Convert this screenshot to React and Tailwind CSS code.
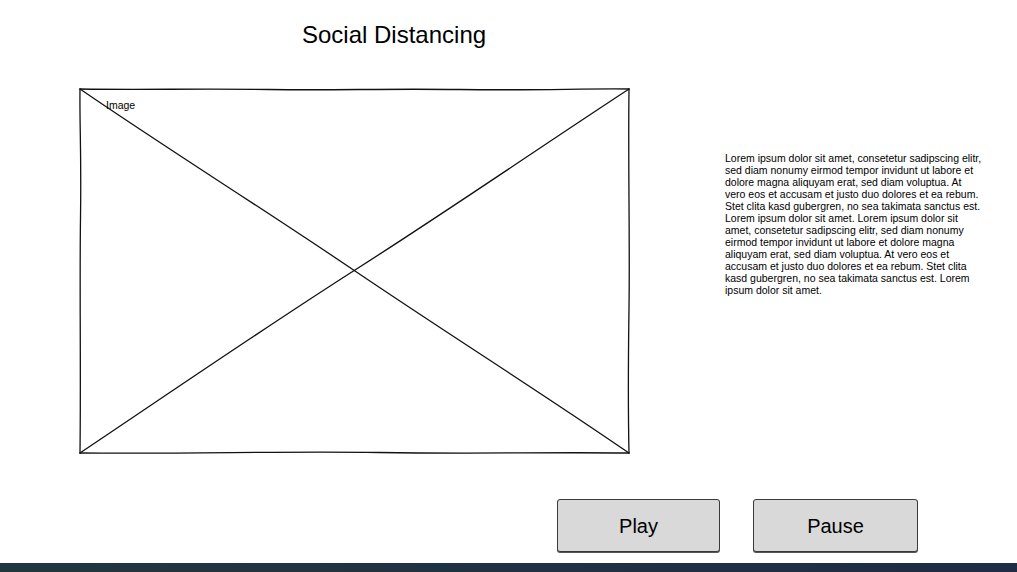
import React from 'react';

const loremText =
  'Lorem ipsum dolor sit amet, consetetur sadipscing elitr, sed diam nonumy eirmod tempor invidunt ut labore et dolore magna aliquyam erat, sed diam voluptua. At vero eos et accusam et justo duo dolores et ea rebum. Stet clita kasd gubergren, no sea takimata sanctus est. Lorem ipsum dolor sit amet. Lorem ipsum dolor sit amet, consetetur sadipscing elitr, sed diam nonumy eirmod tempor invidunt ut labore et dolore magna aliquyam erat, sed diam voluptua. At vero eos et accusam et justo duo dolores et ea rebum. Stet clita kasd gubergren, no sea takimata sanctus est. Lorem ipsum dolor sit amet.';

// Hand-drawn image placeholder (box with a cross)
const ImagePlaceholder = () => (
  <div className="relative w-[551px] h-[366px] shrink-0">
    <svg width="551" height="366" viewBox="0 0 551 366" className="absolute inset-0">
      <g fill="none" stroke="#111" strokeWidth="1.3" strokeLinecap="round">
        <path d="M1 1 C 60 2, 120 0.5, 190 1.5 S 300 0.5, 380 1.5 S 500 0.5, 550 1" />
        <path d="M550 1 C 549 80, 551 150, 550 220 S 549 320, 550 365" />
        <path d="M550 365 C 470 364, 400 366, 300 364.5 S 120 366, 1 365" />
        <path d="M1 365 C 2 280, 0.5 200, 1.5 130 S 0.5 40, 1 1" />
        <path d="M1 1 C 90 62, 180 118, 276 183 S 460 303, 550 365" />
        <path d="M550 1 C 460 60, 370 122, 276 182 S 92 304, 1 365" />
      </g>
    </svg>
    <span className="absolute left-[27px] top-[11px] text-[10.5px] leading-[13px]">Image</span>
  </div>
);

const SketchButton = ({ label, width }) => (
  <button
    className={`${width} h-[53px] bg-[#d9d9d9] border-[1.5px] border-[#3a3a3a] rounded-[3px] shadow-[0_1px_0_#555] text-[20px] leading-[24px] text-black flex items-center justify-center`}
  >
    {label}
  </button>
);

export default function App() {
  return (
    <div className="w-[1017px] h-[572px] bg-white flex flex-col overflow-hidden text-black font-['Liberation_Sans',Arial,sans-serif]">
      <h1 className="pt-[21px] pl-[302px] text-[24px] leading-[28px] font-normal">Social Distancing</h1>

      <div className="flex mt-[39px] ml-[79px]">
        <ImagePlaceholder />
        <p className="ml-[95px] mt-[64px] w-[258px] text-[10.5px] leading-[12px]">{loremText}</p>
      </div>

      <div className="flex mt-[45px] ml-[557px] gap-[33px]">
        <SketchButton label="Play" width="w-[163px]" />
        <SketchButton label="Pause" width="w-[165px]" />
      </div>

      <div className="mt-auto h-[9px] bg-linear-to-r from-[#21373f] to-[#1e2c45]" />
    </div>
  );
}
